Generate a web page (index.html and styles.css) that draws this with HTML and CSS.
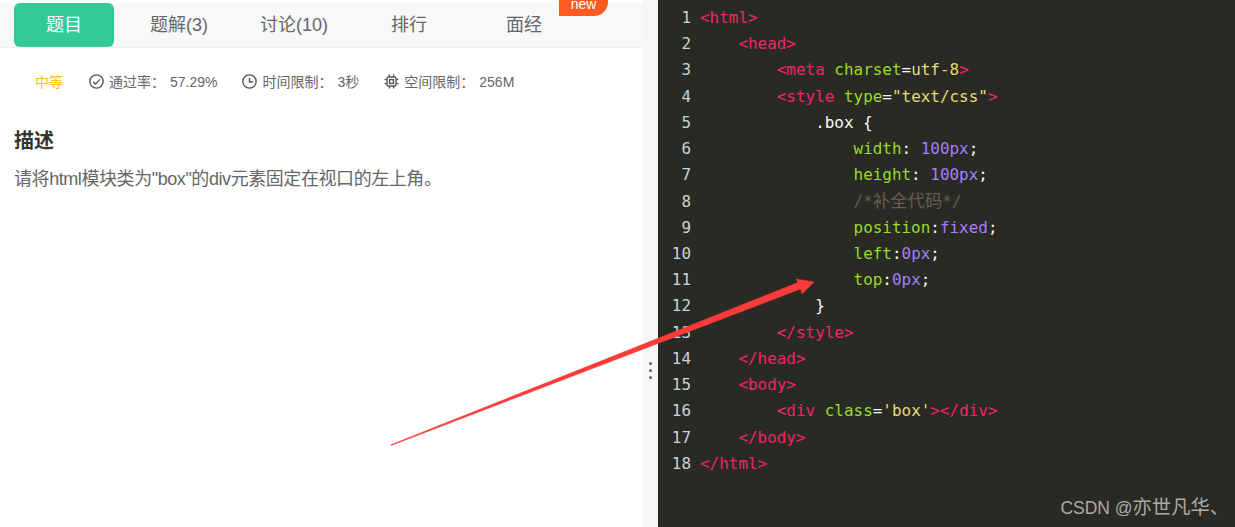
FILE: index.html
```html
<!DOCTYPE html>
<html lang="zh">
<head>
<meta charset="utf-8">
<title>题目</title>
<link rel="stylesheet" href="styles.css">
</head>
<body>
<main class="page">
  <section class="problem">
    <nav class="tabs">
      <a class="tab active">题目</a>
      <a class="tab">题解(3)</a>
      <a class="tab">讨论(10)</a>
      <a class="tab">排行</a>
      <a class="tab">面经<span class="badge">new</span></a>
    </nav>
    <div class="meta">
      <span class="level">中等</span>
      <span class="info info-pass">
        <svg class="icon" viewBox="0 0 14 14"><circle cx="7" cy="7" r="6.2"/><path d="M4 7.2l2.2 2.2L10.2 5"/></svg>
        <span>通过率：<span class="val">57.29%</span></span></span>
      <span class="info info-time">
        <svg class="icon" viewBox="0 0 14 14"><circle cx="7" cy="7" r="6.2"/><path d="M7 3.4V7.4H10.4"/></svg>
        <span>时间限制：<span class="val">3秒</span></span></span>
      <span class="info">
        <svg class="icon" viewBox="0 0 14 14"><rect x="2.8" y="2.8" width="8.4" height="8.4" rx="1.4"/><rect x="5.2" y="5.2" width="3.6" height="3.6"/><path d="M5 .5v2M9 .5v2M5 11.5v2M9 11.5v2M.5 5h2M.5 9h2M11.5 5h2M11.5 9h2"/></svg>
        <span>空间限制：<span class="val">256M</span></span></span>
    </div>
    <h2 class="title">描述</h2>
    <p class="desc">请将html模块类为"box"的div元素固定在视口的左上角。</p>
  </section>
  <div class="splitter"><i></i><i></i><i></i></div>
  <section class="editor">
    <div class="gutter">
      <span>1</span><span>2</span><span>3</span><span>4</span><span>5</span><span>6</span><span>7</span><span>8</span><span>9</span><span>10</span><span>11</span><span>12</span><span>13</span><span>14</span><span>15</span><span>16</span><span>17</span><span>18</span>
    </div>
    <pre class="code"><span class="t">&lt;html&gt;</span>
    <span class="t">&lt;head&gt;</span>
        <span class="t">&lt;meta</span> <span class="a">charset</span>=<span class="s">utf-8</span><span class="t">&gt;</span>
        <span class="t">&lt;style</span> <span class="a">type</span>=<span class="s">"text/css"</span><span class="t">&gt;</span>
            .box {
                <span class="a">width</span>: <span class="n">100px</span>;
                <span class="a">height</span>: <span class="n">100px</span>;
                <span class="c">/*<span class="c-cjk">补全代码</span>*/</span>
                <span class="a">position</span>:<span class="n">fixed</span>;
                <span class="a">left</span>:<span class="n">0px</span>;
                <span class="a">top</span>:<span class="n">0px</span>;
            }
        <span class="t">&lt;/style&gt;</span>
    <span class="t">&lt;/head&gt;</span>
    <span class="t">&lt;body&gt;</span>
        <span class="t">&lt;div</span> <span class="a">class</span>=<span class="s">'box'</span><span class="t">&gt;&lt;/div&gt;</span>
    <span class="t">&lt;/body&gt;</span>
<span class="t">&lt;/html&gt;</span></pre>
  </section>
  <svg class="arrow" viewBox="0 0 1235 527"><polygon points="391,444.7 798,282.5 796,279 814,282 802,294 800.5,289 391,445.5"/></svg>
  <span class="watermark">CSDN @<span class="wm-cjk">亦世凡华、</span></span>
</main>
</body>
</html>
```
FILE: styles.css
```css
* { box-sizing: border-box; }
html, body { margin: 0; height: 100%; overflow: hidden; background: #fff; }
.page {
  position: relative;
  display: flex;
  width: 1235px;
  height: 527px;
  overflow: hidden;
  font-family: "Liberation Sans", "Noto Sans CJK SC", sans-serif;
}
.problem { width: 643px; flex: none; padding-top: 3px; background: #fff; }
.tabs {
  display: flex;
  gap: 15px;
  height: 45px;
  padding-left: 14px;
  background: #f7f8fa;
  border-bottom: 1px solid #eef0f3;
}
.tab {
  position: relative;
  width: 100px;
  height: 44px;
  line-height: 44px;
  text-align: center;
  font-size: 18px;
  color: #666;
}
.tab.active { background: #32ca99; color: #fff; border-radius: 6px; }
.badge {
  position: absolute;
  left: 85px;
  top: -3px;
  width: 49px;
  height: 16px;
  line-height: 9px;
  font-size: 14px;
  color: #fff;
  background: #ff5a1f;
  border-radius: 0 0 14px 0;
  overflow: hidden;
}
.meta {
  display: flex;
  align-items: center;
  height: 20px;
  margin-top: 23px;
  padding-left: 35px;
  font-size: 14px;
  color: #666;
}
.level { color: #f5c211; margin-right: 26px; }
.info { display: flex; align-items: center; gap: 5px; }
.info-pass { margin-right: 25px; }
.info-time { margin-right: 25px; }
.val { margin-left: 5px; }
.icon { width: 15px; height: 15px; fill: none; stroke: #555; stroke-width: 1.3; flex: none; }
.title { margin: 37px 0 0 14px; font-size: 20px; line-height: 26px; font-weight: 700; color: #333; }
.desc { margin: 12px 0 0 14px; font-size: 18px; line-height: 26px; color: #666; letter-spacing: -0.43px; }
.splitter {
  width: 15px;
  flex: none;
  background: #f5f6f8;
  display: flex;
  flex-direction: column;
  align-items: center;
  gap: 4px;
  padding-top: 362px;
}
.splitter i { width: 3px; height: 3px; background: #666; border-radius: 50%; flex: none; }
.editor {
  flex: 1;
  display: flex;
  gap: 9px;
  padding-top: 5px;
  background: #2a2a24;
  font-family: "DejaVu Sans Mono", "Noto Sans CJK SC", monospace;
  font-size: 15.95px;
  line-height: 26.22px;
}
.gutter { width: 33px; display: flex; flex-direction: column; align-items: flex-end; color: #c8d3da; }
.code { margin: 0; font: inherit; color: #f8f8f2; }
.t { color: #f0246a; }
.a { color: #97dc28; }
.s { color: #e6db74; }
.n { color: #a57cff; }
.c { color: #625e50; }
.c-cjk { font-size: 17.4px; line-height: 1; }
.arrow { position: absolute; inset: 0; width: 1235px; height: 527px; }
.arrow polygon { fill: #fb3a3a; stroke: #fb3a3a; stroke-width: .5; }
.watermark { position: absolute; right: 6px; top: 496px; font-size: 17.5px; line-height: 24px; color: #a9aaa6; }
.wm-cjk { font-size: 19.3px; }
```
